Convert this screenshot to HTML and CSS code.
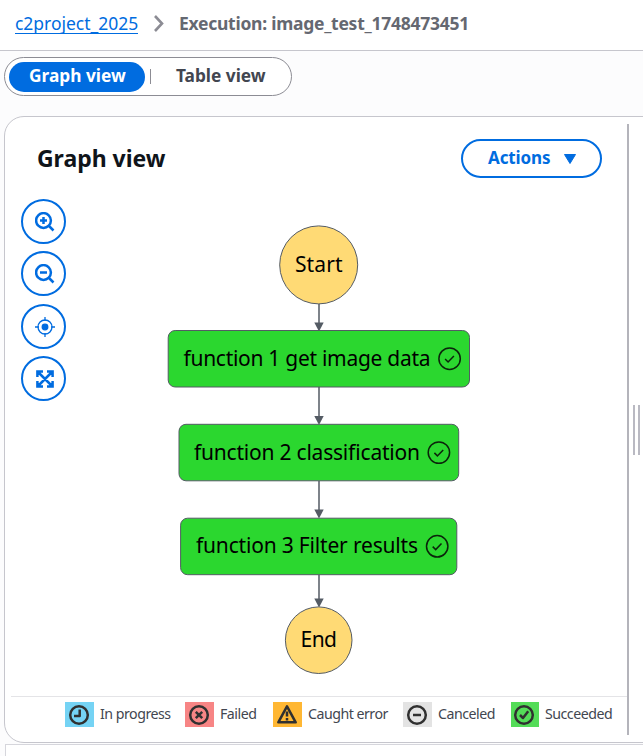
FILE: index.html
```html
<!DOCTYPE html>
<html lang="en">
<head>
<meta charset="utf-8">
<title>Execution</title>
<link rel="stylesheet" href="styles.css">
</head>
<body>
<nav class="breadcrumbs">
  <a class="crumb-link" href="#">c2project_2025</a>
  <svg class="chevron" width="12" height="18" viewBox="0 0 12 18"><path d="M2 2 9 9.500 2 17"/></svg>
  <span class="crumb-current">Execution: image_test_1748473451</span>
</nav>
<div class="switcher">
  <div class="segmented">
    <button class="segment active"><span>Graph view</span></button>
    <i class="segment-divider"></i>
    <button class="segment"><span>Table view</span></button>
  </div>
</div>
<main class="panel">
  <section class="graph-pane">
    <header class="pane-header">
      <h2>Graph view</h2>
      <button class="actions"><span>Actions</span><svg width="14" height="12" viewBox="0 0 14 12"><path d="M1.500 1.500h11L7 10.500Z"/></svg></button>
    </header>
    <div class="workspace">
      <div class="tools">
        <button class="tool"><svg viewBox="0 0 20 20"><circle cx="8.500" cy="8.500" r="7.400"/><path d="M8.500 5v7M5 8.500h7M13.500 13.500l5 5"/></svg></button>
        <button class="tool"><svg viewBox="0 0 20 20"><circle cx="8.500" cy="8.500" r="7.400"/><path d="M5 8.500h7M13.500 13.500l5 5"/></svg></button>
        <button class="tool locate"><svg viewBox="0 0 20 20"><circle cx="10" cy="10" r="7"/><circle class="dot" cx="10" cy="10" r="2.800"/><path d="M10 0v4M10 16v4M0 10h4M16 10h4"/></svg></button>
        <button class="tool"><svg viewBox="0 0 20 20"><path d="M3 3l14 14M17 3 3 17M8 2.400H2.400V8M12 2.400h5.600V8M8 17.600H2.400V12M12 17.600h5.600V12"/></svg></button>
      </div>
      <svg class="graph" width="310" height="456" viewBox="164 222 310 456">
        <defs>
          <g id="ok"><circle r="10.700"/><path d="M-4.500.3-1.500 3.300 4.300-2.700"/></g>
          <path id="tip" d="M-4.700-8.500h9.400L0 .5Z"/>
        </defs>
        <g class="edges">
          <path d="M319 304v20M319 387v31M319 481v31M319 575v26"/>
          <use href="#tip" x="319" y="331"/><use href="#tip" x="319" y="424.500"/><use href="#tip" x="319" y="518"/><use href="#tip" x="319" y="607"/>
        </g>
        <circle class="terminal" cx="318.700" cy="264.900" r="39"/>
        <circle class="terminal" cx="318.700" cy="640.200" r="33.300"/>
        <rect class="state" x="168.200" y="330.500" width="301.300" height="56.500" rx="7"/>
        <rect class="state" x="179" y="424.300" width="279.700" height="56.500" rx="7"/>
        <rect class="state" x="180.600" y="518.200" width="276.200" height="56.500" rx="7"/>
        <g class="labels">
          <text x="295" y="272" textLength="47.500">Start</text>
          <text x="183.500" y="366" textLength="247">function 1 get image data</text>
          <text x="194" y="460" textLength="226">function 2 classification</text>
          <text x="196" y="553" textLength="222">function 3 Filter results</text>
          <text x="300.500" y="647" textLength="36.500">End</text>
        </g>
        <g class="checks"><use href="#ok" x="449.600" y="358.700"/><use href="#ok" x="438.900" y="452.600"/><use href="#ok" x="437.200" y="546.300"/></g>
      </svg>
    </div>
    <footer class="legend">
      <div class="key progress"><svg viewBox="0 0 29 25"><circle cx="14" cy="13" r="8.800"/><path d="M14.700 7.500V14H9"/></svg><span>In progress</span></div>
      <div class="key failed"><svg viewBox="0 0 29 25"><circle cx="14" cy="13" r="8.800"/><path d="m10.800 9.800 6.400 6.400M17.200 9.800l-6.400 6.400"/></svg><span>Failed</span></div>
      <div class="key caught"><svg viewBox="0 0 29 25"><path d="M14 4.300 22.700 20.300H5.300Z"/><path d="M14 9.500v5M14 16v2.500"/></svg><span>Caught error</span></div>
      <div class="key canceled"><svg viewBox="0 0 29 25"><circle cx="14" cy="13" r="8.800"/><path d="M10 13h8"/></svg><span>Canceled</span></div>
      <div class="key succeeded"><svg viewBox="0 0 28 25"><circle cx="13" cy="13" r="8.800"/><path d="m9 13 3 3 5.200-6.700"/></svg><span>Succeeded</span></div>
    </footer>
  </section>
  <div class="resize-handle"><i></i><i></i></div>
</main>
<div class="next-panel"></div>
</body>
</html>
```
FILE: styles.css
```css
* { box-sizing: border-box; }
body { margin: 0; width: 643px; height: 756px; overflow: hidden; background: #fcfcfd; font-family: "Noto Sans", "Open Sans", sans-serif; color: #424650; }
button { font: inherit; margin: 0; padding: 0; background: none; border: 0; }
svg { display: block; flex: none; fill: none; }
span, h2, a { white-space: nowrap; }
.breadcrumbs { display: flex; align-items: center; height: 51px; padding: 0 0 4px 15px; border-bottom: 1px solid #c6c6cd; background: #fff; font-size: 17.500px; }
.crumb-link { width: 123px; color: #006ce0; text-decoration: none; line-height: 20px; border-bottom: 1px solid #006ce0; letter-spacing: -.03px; }
.chevron { margin: 0 14px 0 15px; stroke: #8c8c94; stroke-width: 2.600; }
.crumb-current { color: #656871; font-weight: 700; letter-spacing: -.26px; }
.switcher { height: 65px; padding: 6px 0 0 4px; }
.segmented { display: flex; align-items: center; width: 288px; height: 39px; padding: 0 4px; border: 1px solid #8c8c94; border-radius: 20px; background: #fff; font-size: 17.300px; font-weight: 700; }
.segment { display: flex; flex: none; align-items: center; width: 136px; height: 30px; padding-left: 20px; border-radius: 15px; color: #424650; }
.segment:last-child { width: 130px; padding-left: 19px; }
.segment.active { background: #006ce0; color: #fff; }
.segment span { line-height: 24px; margin-top: -2px; }
.segment-divider { width: 1px; height: 15px; margin: 0 6px 0 5px; background: #8c8c94; }
.panel { display: flex; width: 670px; height: 627px; margin-left: 4px; border: 1px solid #c6c6cd; border-radius: 20px; background: #fff; }
.graph-pane { display: flex; flex-direction: column; width: 624px; height: 611px; margin-top: 7px; padding-left: 6px; border-right: 2px solid #b4b4bb; }
.pane-header { display: flex; align-items: flex-start; justify-content: space-between; height: 75px; padding: 15px 25px 0 26px; }
h2 { margin: 3px 0 0; font-size: 23px; line-height: 32px; font-weight: 700; color: #0f141a; letter-spacing: -.03px; }
.actions { display: flex; align-items: center; width: 141px; height: 39px; padding-left: 25px; border: 2px solid #006ce0; border-radius: 20px; color: #006ce0; font-size: 17px; font-weight: 700; letter-spacing: -.1px; }
.actions span { width: 62px; line-height: 24px; margin-top: -2px; }
.actions svg { margin-left: 13px; fill: #006ce0; stroke: #006ce0; stroke-linejoin: round; }
.workspace { display: flex; height: 497px; }
.tools { display: flex; flex-direction: column; gap: 7.400px; width: 153px; padding-left: 10px; }
.tool { display: flex; align-items: center; justify-content: center; width: 45px; height: 45px; flex: none; border: 2px solid #006ce0; border-radius: 50%; }
.tool svg { width: 20px; height: 20px; margin: 1px 0 0 2px; stroke: #006ce0; stroke-width: 2.500; }
.tool.locate svg { stroke-width: 1.300; }
.tool .dot { fill: #006ce0; }
.graph { margin-top: 23px; }
.edges { stroke: #545b64; stroke-width: 1.500; fill: #545b64; }
.edges use { stroke: none; }
.terminal { fill: #ffda75; stroke: #545b64; }
.state { fill: #2bd72f; stroke: #545b64; }
.labels { font-size: 21px; fill: #000; }
.checks { stroke: #0b240b; stroke-width: 1.500; }
.legend { display: flex; height: 39px; padding: 5px 0 0 54px; border-top: 1px solid #e4e4e7; font-size: 14.200px; }
.key { display: flex; align-items: center; gap: 6px; height: 25px; }
.key svg { width: 29px; height: 25px; stroke: #303030; stroke-width: 2.500; stroke-linejoin: round; }
.key span { line-height: 20px; margin-top: -1px; letter-spacing: -.5px; }
.progress { width: 120px; }
.progress svg { background: #75d3f4; }
.failed { width: 88px; }
.failed svg { background: #f78585; }
.caught { width: 130px; }
.caught svg { background: #ffb733; }
.canceled { width: 108px; }
.canceled svg { background: #e3e3e3; }
.succeeded svg { width: 28px; background: #54dc58; }
.resize-handle { display: flex; align-items: center; gap: 3px; margin-left: 4px; }
.resize-handle i { width: 2px; height: 50px; background: #b9b9c2; }
.next-panel { width: 660px; height: 30px; margin: 1px 0 0 5px; border: 1px solid #d6d6dc; background: #fff; }
```
